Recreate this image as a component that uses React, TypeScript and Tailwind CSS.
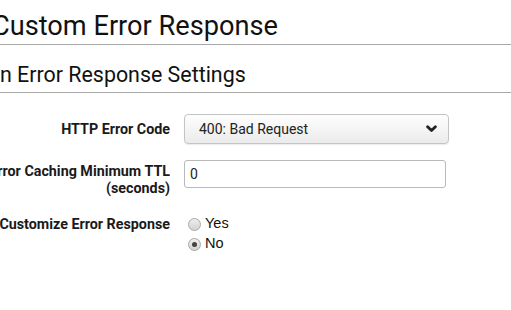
import React from 'react'

function ChevronDown() {
  return (
    <svg width="11" height="8" viewBox="0 0 11 8" className="text-[#222]">
      <path d="M1.6 1.8 L5.5 5.6 L9.4 1.8" fill="none" stroke="currentColor" strokeWidth="2.8" strokeLinecap="round" strokeLinejoin="round" />
    </svg>
  )
}

function Radio({ checked, label }: { checked?: boolean; label: string }) {
  return (
    <label className="flex items-center gap-[4px] h-[20px]">
      <span className="w-[13px] h-[13px] rounded-full border border-[#a9a9a9] bg-gradient-to-b from-[#eeeeee] to-[#d2d2d2] flex items-center justify-center">
        {checked && <span className="w-[5px] h-[5px] rounded-full bg-[#444]" />}
      </span>
      <span className="text-[14.5px] text-[#111] font-['Liberation_Sans',Arial,sans-serif]">{label}</span>
    </label>
  )
}

export default function App() {
  return (
    <div className="w-[511px] h-[310px] overflow-hidden bg-white font-['Roboto',sans-serif] text-[#111]">
      <div className="h-[45px] border-b border-[#a8a8a8] flex items-end pb-[2px]">
        <h1 className="ml-[-8px] text-[27.2px] leading-[32px] font-normal whitespace-nowrap">Custom Error Response</h1>
      </div>
      <div className="h-[48px] border-b border-[#a8a8a8] flex items-end pb-[4px]">
        <h2 className="text-[21.4px] leading-[26px] font-normal whitespace-nowrap">n Error Response Settings</h2>
      </div>

      <div className="flex flex-col mt-[21px] text-[#1a1a1a]">
        <div className="flex items-center">
          <div className="w-[170px] text-right text-[14.3px] font-bold leading-[17px]">HTTP Error Code</div>
          <div className="ml-[14px] w-[265px] h-[30px] rounded-[4px] border border-[#c4c4c4] bg-gradient-to-b from-[#fefefe] to-[#ebebeb] flex items-center justify-between pl-[14px] pr-[11px] shadow-[0_1px_1px_rgba(0,0,0,0.08)]">
            <span className="text-[14px] text-[#222]">400: Bad Request</span>
            <ChevronDown />
          </div>
        </div>

        <div className="flex items-start mt-[16px]">
          <div className="w-[170px] text-right text-[14.3px] font-bold leading-[17px] pt-[3px] whitespace-nowrap overflow-hidden flex flex-col items-end">
            <span>Error Caching Minimum TTL</span>
            <span>(seconds)</span>
          </div>
          <div className="ml-[14px] w-[262px] h-[28px] rounded-[3px] border border-[#b9b9b9] bg-white flex items-center pl-[5px]">
            <span className="text-[14px] text-[#222]">0</span>
          </div>
        </div>

        <div className="flex items-start mt-[17px]">
          <div className="w-[170px] text-right text-[14.3px] font-bold leading-[17px] pt-[2px] whitespace-nowrap flex justify-end overflow-hidden">
            <span>Customize Error Response</span>
          </div>
          <div className="ml-[18px] flex flex-col">
            <Radio label="Yes" />
            <Radio label="No" checked />
          </div>
        </div>
      </div>
    </div>
  )
}
